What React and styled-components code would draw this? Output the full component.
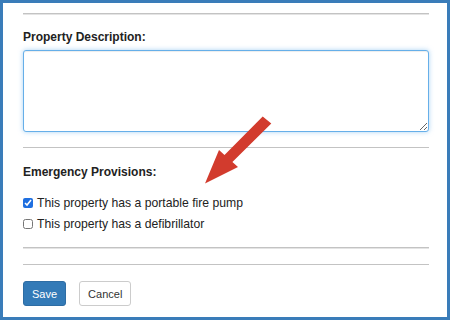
import React from "react";
import styled, { createGlobalStyle } from "styled-components";

const Global = createGlobalStyle`
  html, body { margin: 0; padding: 0; background: #fff; }
  body { font-family: "Liberation Sans", Arial, sans-serif; color: #333; }
  * { box-sizing: border-box; }
`;

const Frame = styled.div`
  position: relative;
  width: 450px;
  height: 320px;
  border: 3px solid #3a7cb9;
  background: #fff;
  padding: 10px 18px 0 20px;
  overflow: hidden;
`;

const Rule = styled.div`
  height: ${(p) => (p.$double ? 2 : 1)}px;
  border-top: 1px solid #c3c3c3;
  ${(p) => (p.$double ? "border-bottom: 1px solid #e4e4e4;" : "")}
  margin-top: ${(p) => p.$mt || 0}px;
`;

const Label = styled.div`
  font-size: 12px;
  line-height: 15px;
  font-weight: bold;
  color: #222;
  margin-top: ${(p) => p.$mt || 0}px;
`;

const TextArea = styled.textarea`
  display: block;
  width: 100%;
  height: 82px;
  margin-top: 5px;
  border: 1px solid #66afe9;
  border-radius: 3px;
  box-shadow: inset 0 1px 1px rgba(0, 0, 0, 0.075), 0 0 5px rgba(102, 175, 233, 0.55);
  outline: none;
  resize: vertical;
  font-family: inherit;
  font-size: 12px;
  padding: 4px 8px;
`;

const Checks = styled.div`
  margin-top: 12px;
  display: flex;
  flex-direction: column;
`;

const CheckRow = styled.label`
  display: flex;
  align-items: center;
  height: 21px;
  font-size: 12.2px;
  color: #222;
`;

const Box = styled.input`
  width: 10px;
  height: 10px;
  margin: 0 4px 0 0;
  accent-color: #1f6fe0;
`;

const Actions = styled.div`
  display: flex;
  gap: 13px;
  margin-top: 16px;
`;

const Button = styled.button`
  height: 25px;
  padding: 0 8px;
  border-radius: 3px;
  font-family: "Liberation Sans", Arial, sans-serif;
  font-size: 11px;
  border: 1px solid ${(p) => (p.$primary ? "#2e6da4" : "#cccccc")};
  background: ${(p) => (p.$primary ? "#337ab7" : "#ffffff")};
  color: ${(p) => (p.$primary ? "#ffffff" : "#333333")};
  cursor: pointer;
`;

const Arrow = styled.svg`
  position: absolute;
  left: -3px;
  top: -3px;
  width: 450px;
  height: 320px;
  pointer-events: none;
`;

export default function App() {
  return (
    <>
      <Global />
      <Frame>
        <Rule $double />
        <Label $mt={15}>Property Description:</Label>
        <TextArea />
        <Rule $mt={15} />
        <Label $mt={17}>Emergency Provisions:</Label>
        <Checks>
          <CheckRow>
            <Box type="checkbox" defaultChecked />
            This property has a portable fire pump
          </CheckRow>
          <CheckRow>
            <Box type="checkbox" />
            This property has a defibrillator
          </CheckRow>
        </Checks>
        <Rule $double $mt={13} />
        <Rule $mt={15} />
        <Actions>
          <Button $primary>Save</Button>
          <Button>Cancel</Button>
        </Actions>
        <Arrow viewBox="0 0 450 320">
          <polygon
            points="262.7,116.5 271.3,123.5 232.4,162 238,167 205,183.5 219,150 224.5,155"
            fill="#d23b2d"
          />
        </Arrow>
      </Frame>
    </>
  );
}
